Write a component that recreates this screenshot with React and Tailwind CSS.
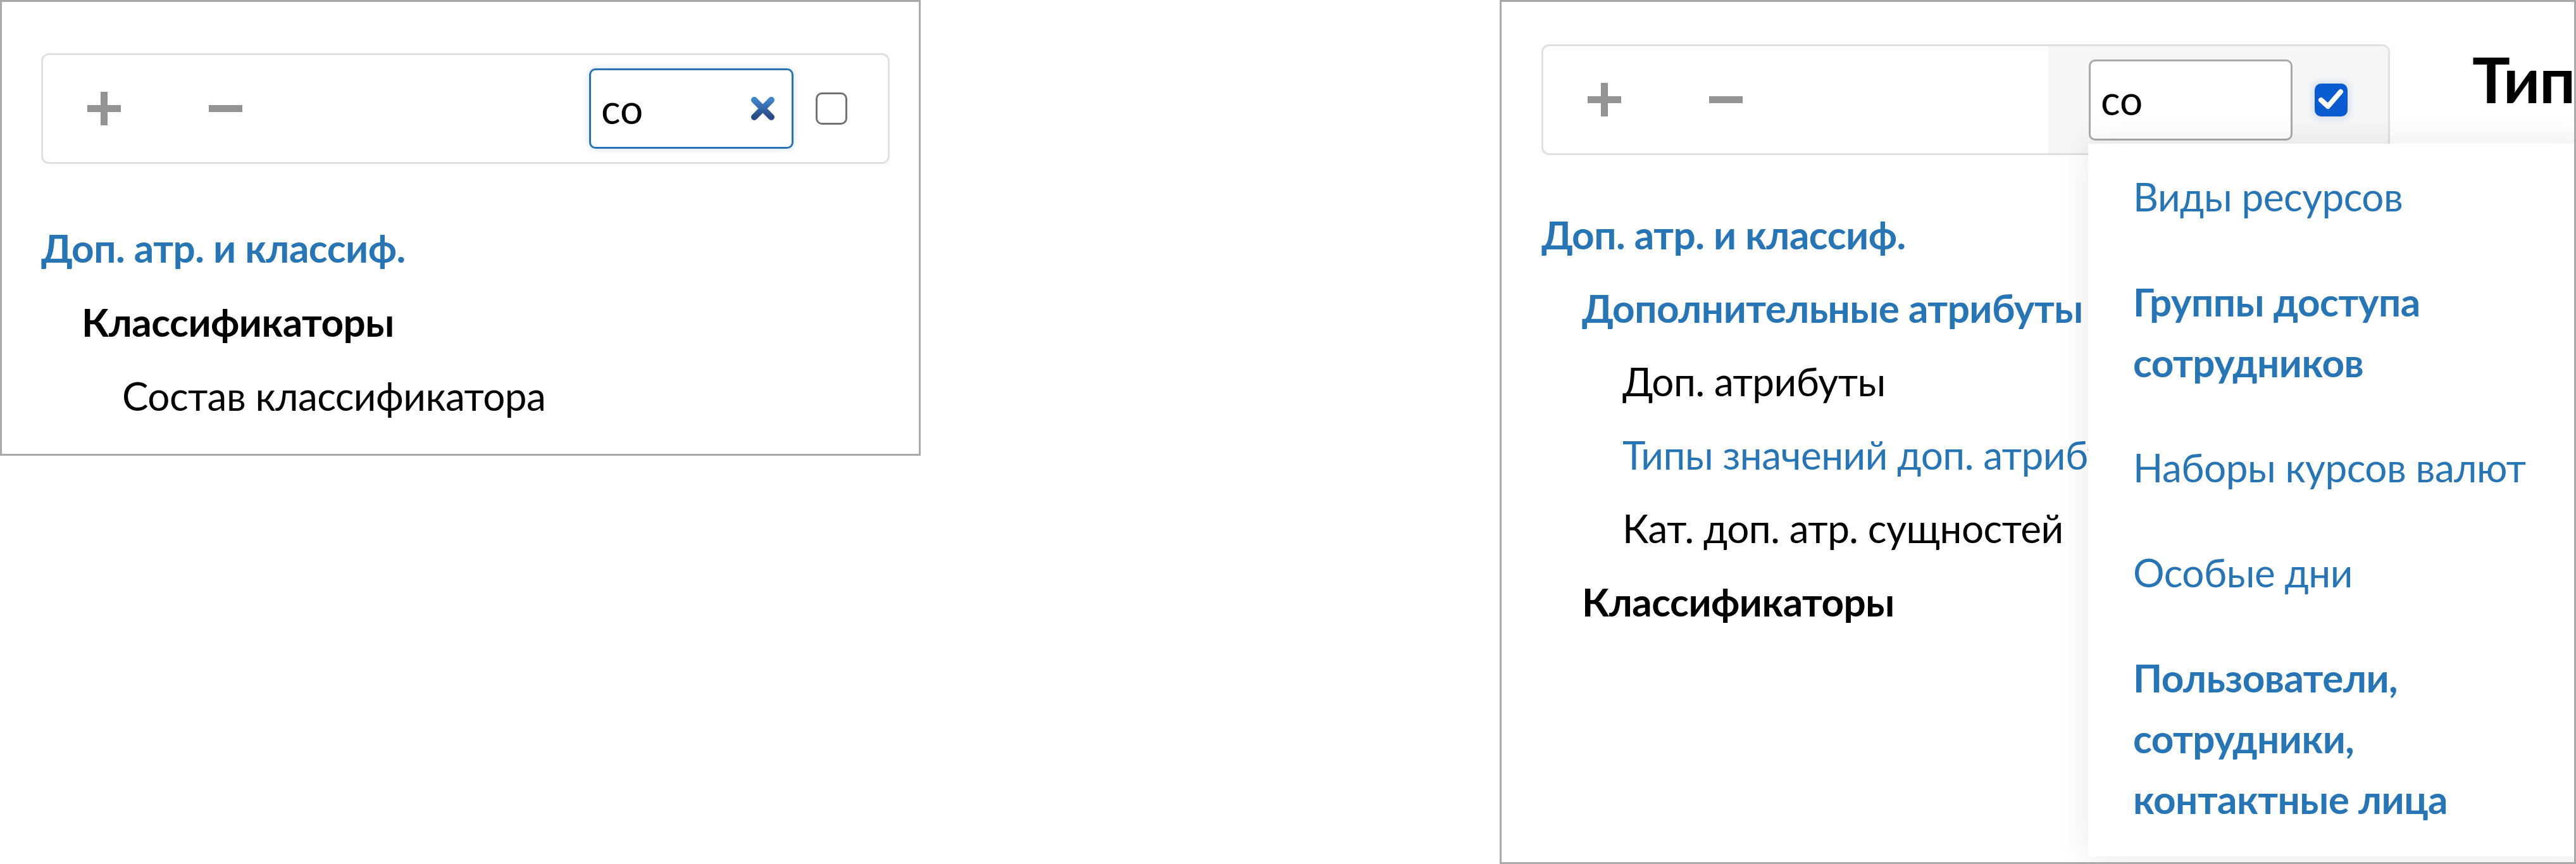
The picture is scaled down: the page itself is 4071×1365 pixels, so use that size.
import React from "react";

const LEFT_TREE = [
  { label: "Доп. атр. и классиф.", level: 0, tone: "blue", bold: true },
  { label: "Классификаторы", level: 1, tone: "black", bold: true },
  { label: "Состав классификатора", level: 2, tone: "black", bold: false },
];

const RIGHT_TREE = [
  { label: "Доп. атр. и классиф.", level: 0, tone: "blue", bold: true },
  { label: "Дополнительные атрибуты", level: 1, tone: "blue", bold: true },
  { label: "Доп. атрибуты", level: 2, tone: "black", bold: false },
  { label: "Типы значений доп. атрибутов", level: 2, tone: "blue", bold: false },
  { label: "Кат. доп. атр. сущностей", level: 2, tone: "black", bold: false },
  { label: "Классификаторы", level: 1, tone: "black", bold: true },
];

const SUGGESTIONS = [
  { label: "Виды ресурсов", bold: false },
  { label: "Группы доступа сотрудников", bold: true },
  { label: "Наборы курсов валют", bold: false },
  { label: "Особые дни", bold: false },
  { label: "Пользователи, сотрудники, контактные лица", bold: true },
];

const INDENT = ["pl-0", "pl-[64px]", "pl-[128px]"];

function PlusIcon() {
  return (
    <svg width="53" height="53" viewBox="0 0 53 53">
      <rect x="21" y="0" width="11" height="53" fill="#939393" />
      <rect x="0" y="21" width="53" height="11" fill="#939393" />
    </svg>
  );
}

function MinusIcon() {
  return (
    <svg width="53" height="11" viewBox="0 0 53 11">
      <rect x="0" y="0" width="53" height="11" fill="#939393" />
    </svg>
  );
}

function ClearIcon() {
  return (
    <svg width="39" height="39" viewBox="0 0 39 39">
      <defs>
        <linearGradient id="clear-x" x1="0" y1="0" x2="0" y2="1">
          <stop offset="0" stopColor="#3f84c6" />
          <stop offset="1" stopColor="#284a85" />
        </linearGradient>
      </defs>
      <path d="M6 6 L33 33 M33 6 L6 33" stroke="url(#clear-x)" strokeWidth="10" strokeLinecap="round" fill="none" />
    </svg>
  );
}

function Checkbox({ checked }) {
  if (checked) {
    return (
      <div className="ml-[35px] flex h-[52px] w-[52px] items-center justify-center rounded-[10px] bg-[#0a5bcf] shadow-[0_0_8px_5px_rgba(10,91,207,0.10)]">
        <svg width="52" height="52" viewBox="0 0 52 52">
          <path d="M10 26 L21 36 L41 13" stroke="#ffffff" strokeWidth="8" strokeLinecap="round" strokeLinejoin="round" fill="none" />
        </svg>
      </div>
    );
  }
  return <div className="ml-[35px] h-[51px] w-[50px] rounded-[10px] border-[3px] border-[#727272] bg-white" />;
}

function Toolbar({ focused }) {
  return (
    <div className="flex h-[175px] w-[1341px] shrink-0 items-center overflow-hidden rounded-[12px] border-[3px] border-[#dfe0e2] bg-white">
      <button className="ml-[70px] flex h-[53px] w-[53px] items-center justify-center">
        <PlusIcon />
      </button>
      <button className="ml-[139px] flex h-[53px] w-[53px] items-center justify-center">
        <MinusIcon />
      </button>

      {/* search + "only matches" checkbox */}
      <div className={focused ? "ml-auto flex h-full items-center px-[64px]" : "ml-auto flex h-full items-center bg-[#f5f6f7] px-[64px]"}>
        <div
          className={
            focused
              ? "flex h-[127px] w-[323px] items-center rounded-[10px] border-[3px] border-[#2a74b6] bg-white pl-[16px] pr-[26px] shadow-[0_0_12px_rgba(42,116,182,0.22)]"
              : "flex h-[128px] w-[322px] items-center rounded-[10px] border-[3px] border-[#a9a9a9] bg-white pl-[16px] pr-[26px]"
          }
        >
          <span className="text-[64px] leading-none text-black">co</span>
          {focused && (
            <span className="ml-auto flex">
              <ClearIcon />
            </span>
          )}
        </div>
        <Checkbox checked={!focused} />
      </div>
    </div>
  );
}

function TreeRow({ item, rowClass }) {
  const color = item.tone === "blue" ? "text-[#2775b5]" : "text-black";
  const weight = item.bold ? "font-bold" : "font-normal";
  return (
    <div className={`flex items-center whitespace-nowrap text-[62px] leading-[96px] tracking-[-0.5px] ${rowClass} ${INDENT[item.level]} ${color} ${weight}`}>
      {item.label}
    </div>
  );
}

export default function App() {
  return (
    <div className="flex h-[1365px] w-[4071px] items-start gap-[915px] bg-white font-['Lato','Open_Sans',sans-serif]">
      {/* filtered tree, search focused */}
      <div className="h-[720px] w-[1455px] shrink-0 border-[3px] border-[#aaaaaa] bg-white pl-[62px] pt-[81px]">
        <Toolbar focused />
        <div className="mt-[73px]">
          {LEFT_TREE.map((it) => (
            <TreeRow key={it.label} item={it} rowClass="h-[117px]" />
          ))}
        </div>
      </div>

      {/* filtered tree with suggestions open */}
      <div className="relative h-[1365px] w-[1701px] shrink-0 overflow-hidden border-[3px] border-[#aaaaaa] bg-white pl-[63px] pt-[67px]">
        <div className="flex items-start">
          <div className="w-[1341px] shrink-0">
            <Toolbar />
            {/* tree is hidden behind the suggestion list from x≈864 on */}
            <div className="mt-[67px] w-[864px] overflow-hidden">
              {RIGHT_TREE.map((it) => (
                <TreeRow key={it.label} item={it} rowClass="h-[116px]" />
              ))}
            </div>
          </div>
          <h1 className="-mt-[6px] ml-[130px] whitespace-nowrap text-[100px] font-bold leading-[120px] tracking-[-1px] text-black">
            Типы значений доп. атрибутов
          </h1>
        </div>

        <div className="absolute left-[927px] top-[224px] z-10 w-[800px] bg-white pb-[8px] shadow-[0_0_50px_rgba(0,0,0,0.09)]">
          {SUGGESTIONS.map((s) => (
            <div
              key={s.label}
              className={`px-[71px] py-[35px] text-[62px] leading-[96px] tracking-[-0.5px] text-[#2775b5] ${s.bold ? "font-bold" : "font-normal"}`}
            >
              {s.label}
            </div>
          ))}
        </div>
      </div>
    </div>
  );
}
